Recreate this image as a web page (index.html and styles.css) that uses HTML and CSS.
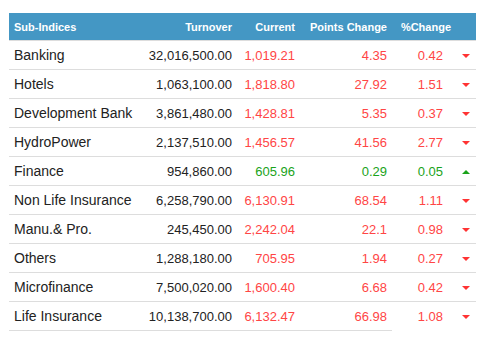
FILE: index.html
```html
<!DOCTYPE html>
<html lang="en">
<head>
    <meta charset="UTF-8">
    <title>Sub-Indices</title>
    <link rel="stylesheet" href="styles.css">
</head>
<body>
    <div class="wrap">
        <table class="indices">
            <colgroup>
                <col class="c-name">
                <col class="c-turn">
                <col class="c-cur">
                <col class="c-pts">
                <col class="c-pct">
                <col class="c-arrow">
            </colgroup>
            <thead>
                <tr>
                    <th class="name">Sub-Indices</th>
                    <th>Turnover</th>
                    <th>Current</th>
                    <th>Points Change</th>
                    <th>%Change</th>
                    <th></th>
                </tr>
            </thead>
            <tbody>
                <tr class="down">
                    <td class="name">Banking</td>
                    <td class="turn">32,016,500.00</td>
                    <td>1,019.21</td>
                    <td>4.35</td>
                    <td class="pct">0.42</td>
                    <td class="arrow"><span></span></td>
                </tr>
                <tr class="down">
                    <td class="name">Hotels</td>
                    <td class="turn">1,063,100.00</td>
                    <td>1,818.80</td>
                    <td>27.92</td>
                    <td class="pct">1.51</td>
                    <td class="arrow"><span></span></td>
                </tr>
                <tr class="down">
                    <td class="name">Development Bank</td>
                    <td class="turn">3,861,480.00</td>
                    <td>1,428.81</td>
                    <td>5.35</td>
                    <td class="pct">0.37</td>
                    <td class="arrow"><span></span></td>
                </tr>
                <tr class="down">
                    <td class="name">HydroPower</td>
                    <td class="turn">2,137,510.00</td>
                    <td>1,456.57</td>
                    <td>41.56</td>
                    <td class="pct">2.77</td>
                    <td class="arrow"><span></span></td>
                </tr>
                <tr class="up">
                    <td class="name">Finance</td>
                    <td class="turn">954,860.00</td>
                    <td>605.96</td>
                    <td>0.29</td>
                    <td class="pct">0.05</td>
                    <td class="arrow"><span></span></td>
                </tr>
                <tr class="down">
                    <td class="name">Non Life Insurance</td>
                    <td class="turn">6,258,790.00</td>
                    <td>6,130.91</td>
                    <td>68.54</td>
                    <td class="pct">1.11</td>
                    <td class="arrow"><span></span></td>
                </tr>
                <tr class="down">
                    <td class="name">Manu.&amp; Pro.</td>
                    <td class="turn">245,450.00</td>
                    <td>2,242.04</td>
                    <td>22.1</td>
                    <td class="pct">0.98</td>
                    <td class="arrow"><span></span></td>
                </tr>
                <tr class="down">
                    <td class="name">Others</td>
                    <td class="turn">1,288,180.00</td>
                    <td>705.95</td>
                    <td>1.94</td>
                    <td class="pct">0.27</td>
                    <td class="arrow"><span></span></td>
                </tr>
                <tr class="down">
                    <td class="name">Microfinance</td>
                    <td class="turn">7,500,020.00</td>
                    <td>1,600.40</td>
                    <td>6.68</td>
                    <td class="pct">0.42</td>
                    <td class="arrow"><span></span></td>
                </tr>
                <tr class="down last">
                    <td class="name">Life Insurance</td>
                    <td class="turn">10,138,700.00</td>
                    <td>6,132.47</td>
                    <td>66.98</td>
                    <td class="pct">1.08</td>
                    <td class="arrow"><span></span></td>
                </tr>
            </tbody>
        </table>
    </div>
</body>
</html>
```

FILE: styles.css
```css
body {
    margin: 0;
    padding: 0;
    background: #fff;
    font-family: "Liberation Sans", Arial, sans-serif;
}

.wrap {
    padding: 13px 11px 0 9px;
}

.indices {
    width: 467px;
    border-collapse: collapse;
    table-layout: fixed;
}

.c-name { width: 131px; }
.c-turn { width: 97px; }
.c-cur { width: 63px; }
.c-pts { width: 92px; }
.c-pct { width: 64px; }
.c-arrow { width: 20px; }

.indices th {
    background: #4497c4;
    color: #fff;
    font-size: 11px;
    font-weight: bold;
    text-align: right;
    height: 27px;
    padding: 0 5px 0 0;
    border-bottom: 1px solid #ddd;
    white-space: nowrap;
}

.indices td {
    height: 28px;
    padding: 0 5px 0 0;
    text-align: right;
    font-size: 13px;
    border-bottom: 1px solid #ddd;
    white-space: nowrap;
}

.indices .name {
    text-align: left;
    padding-left: 5px;
}

.indices td.name {
    font-size: 14px;
    color: #222;
}

.indices td.turn {
    color: #222;
}

.indices td.pct {
    padding-right: 13px;
}

.indices td.arrow {
    text-align: left;
    padding: 0 0 0 6px;
}

.down td { color: #ff4545; }
.up td { color: #1aa31a; }

.arrow span {
    display: inline-block;
    width: 0;
    height: 0;
    border-left: 4px solid transparent;
    border-right: 4px solid transparent;
    vertical-align: middle;
}

.down .arrow span {
    border-top: 4px solid #ff3333;
}

.up .arrow span {
    border-bottom: 4px solid #1aa31a;
}

.last td.pct,
.last td.arrow {
    border-bottom: none;
}
```
